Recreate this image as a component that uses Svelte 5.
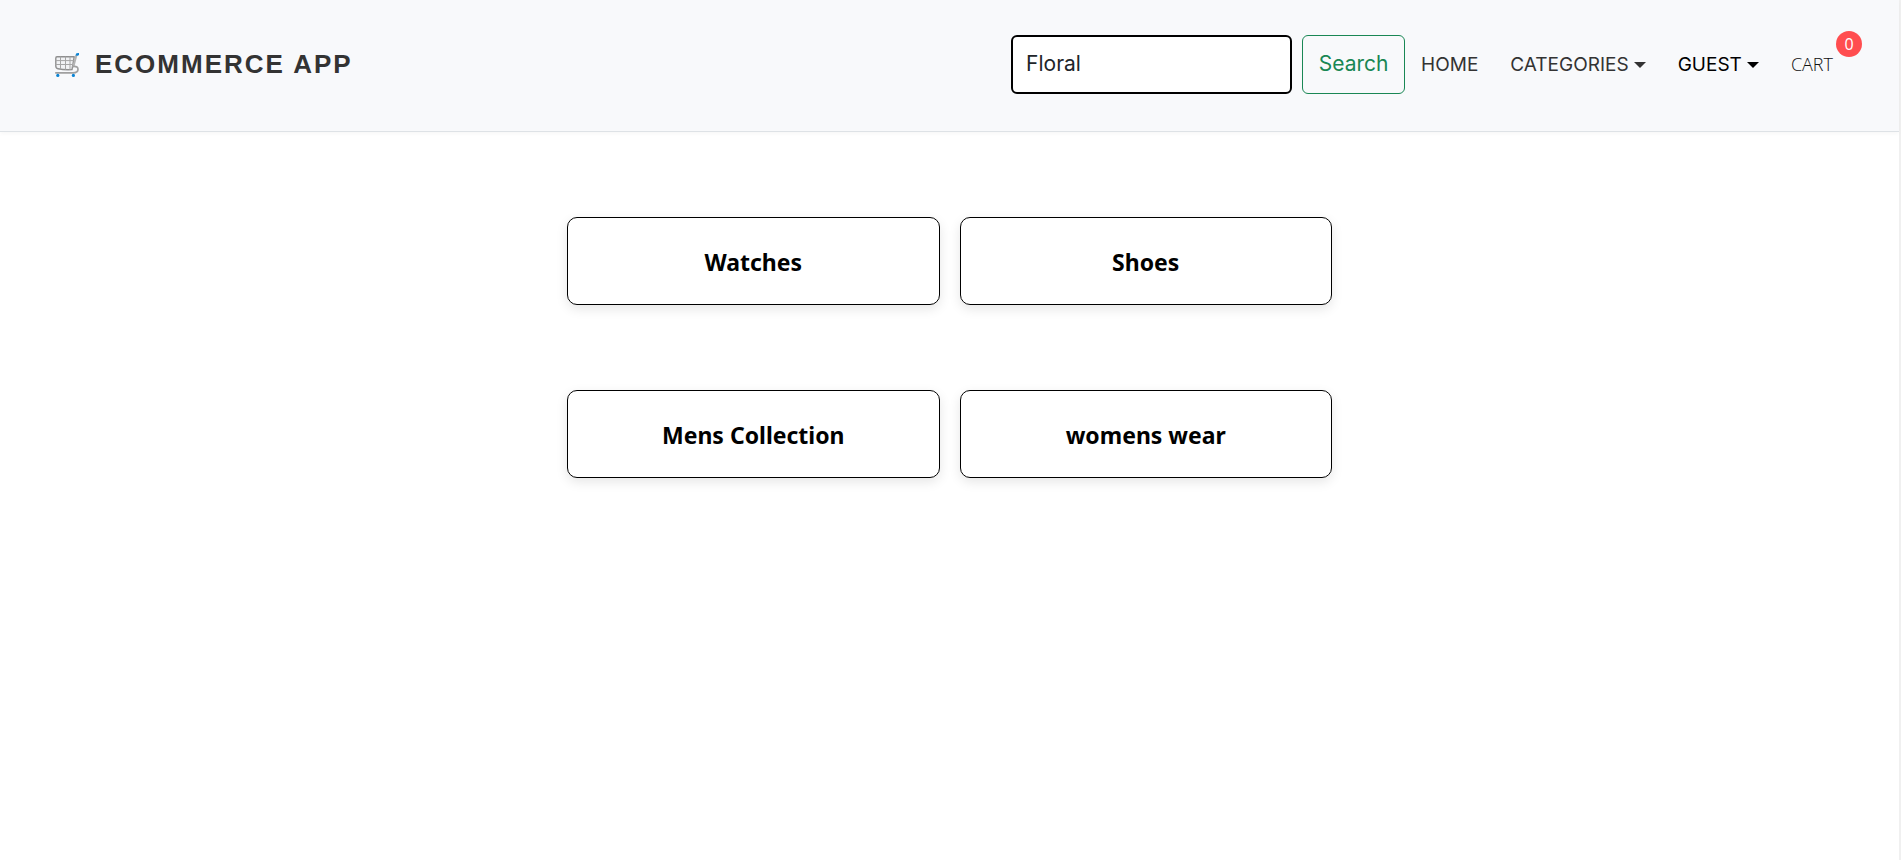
<script>
  const categories = ['Watches', 'Shoes', 'Mens Collection', 'womens wear'];
  let keyword = $state('Floral');
  let cartCount = $state(0);
</script>

<div class="page">
  <header>
    <a class="brand" href="#home">
      <svg class="logo" viewBox="0 0 24 24" aria-hidden="true">
        <g fill="none" stroke="#8f8f8f" stroke-linejoin="round" stroke-linecap="round">
          <path d="M.8 5.2Q.8 3.8 2 3.8H19.2L17 16.6Q9 17 3 15.8Q.8 15.4.8 13Z" stroke-width="1.4" fill="#f1f2f4" />
          <path d="M5.5 4V16M10.5 4V16.4M15 4V16.6M1 7.6H18.4M1 11.5H17.8" stroke="#a5a5a5" stroke-width="1" />
          <path d="M21.4 2.2L18.4 13.6" stroke="#b3b3b3" stroke-width="2" />
          <path d="M18.8 13.4Q23 13.2 23 16.2Q23 19.7 18 19.8H.8" stroke="#a0a0a0" stroke-width="1.7" />
        </g>
        <path d="M20.6 2.4L21.4.3L24.2 0V1.8L22.8 2.8Z" fill="#0b84d4" />
        <circle cx="2.8" cy="22.4" r="1.6" fill="#0b84d4" />
        <circle cx="18.4" cy="22.4" r="1.6" fill="#0b84d4" />
      </svg>
      <span>ECOMMERCE APP</span>
    </a>

    <form role="search" onsubmit={(e) => e.preventDefault()}>
      <input type="search" aria-label="Search" bind:value={keyword} />
      <button type="submit">Search</button>
    </form>

    <nav>
      <a href="#home">HOME</a>
      <a class="drop" href="#categories">CATEGORIES</a>
      <a class="drop guest" href="#guest">GUEST</a>
      <a class="cart" href="#cart">CART<span class="badge">{cartCount}</span></a>
    </nav>
  </header>

  <main>
    {#each categories as name}
      <a class="card" href="#category">{name}</a>
    {/each}
  </main>
</div>

<style>
  :global(body) {
    margin: 0;
    background: #fff;
  }
  .page {
    box-sizing: border-box;
    min-height: 100vh;
    border-right: 2px solid #f0f0f0;
    font-family: Inter, sans-serif;
  }
  a {
    color: inherit;
    text-decoration: none;
  }
  header {
    display: flex;
    align-items: center;
    padding: 35px 66px 37px 55px;
    background: #f8f9fb;
    border-bottom: 1px solid #dee2e6;
    box-shadow: 0 2px 4px rgba(0, 0, 0, 0.03);
    color: #333;
  }
  .brand {
    display: flex;
    align-items: center;
    gap: 16px;
    margin-right: auto;
    font: bold 26px/30px 'Liberation Sans', Arial, sans-serif;
    letter-spacing: 2px;
  }
  .brand span {
    padding-bottom: 2px;
  }
  .logo {
    width: 24px;
    height: 24px;
  }
  form {
    display: flex;
    gap: 10px;
  }
  input,
  button {
    box-sizing: border-box;
    height: 59px;
    margin: 0;
    border-radius: 6px;
    font: 400 21px/30px Inter, sans-serif;
  }
  input {
    width: 281px;
    padding: 0 13px 2px;
    border: 2px solid #000;
    background: #fff;
    color: #212529;
    appearance: none;
    outline: none;
  }
  button {
    width: 103px;
    padding: 0 0 2px;
    border: 1px solid #198754;
    background: transparent;
    color: #198754;
  }
  nav {
    display: flex;
    align-items: center;
    gap: 32px;
    margin-left: 16px;
    font-size: 19px;
    line-height: 30px;
  }
  .drop {
    display: flex;
    align-items: center;
    gap: 5px;
  }
  .drop::after {
    content: '';
    border: 6px solid transparent;
    border-top-color: currentColor;
    border-bottom: 0;
  }
  .guest {
    color: #000;
  }
  .cart {
    position: relative;
    padding-bottom: 2px;
    color: #111;
    font-family: 'Open Sans', sans-serif;
    font-size: 18px;
    font-weight: 300;
  }
  .badge {
    position: absolute;
    left: 100%;
    bottom: 50%;
    width: 26px;
    height: 26px;
    margin: 0 0 8px 3px;
    border-radius: 50%;
    background: #ff4d4f;
    color: #fff;
    font-size: 16px;
    font-weight: 400;
    line-height: 26px;
    text-align: center;
  }
  main {
    display: grid;
    grid-template-columns: 1fr 1fr;
    gap: 85px 20px;
    max-width: 765px;
    margin: 0 auto;
    padding: 85px 0;
  }
  .card {
    padding: 29px 20px 27px;
    border: 1px solid #000;
    border-radius: 10px;
    box-shadow: 0 4px 12px rgba(0, 0, 0, 0.1);
    color: #000;
    font: bold 23px/30px 'Noto Sans', sans-serif;
    text-align: center;
  }
</style>
